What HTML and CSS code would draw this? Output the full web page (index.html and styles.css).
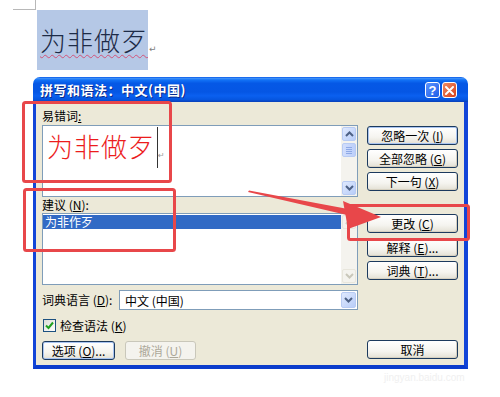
FILE: index.html
```html
<!DOCTYPE html>
<html lang="zh">
<head>
<meta charset="utf-8">
<title>拼写和语法</title>
<link rel="stylesheet" href="styles.css">
</head>
<body>
<div class="page">
  <div class="corner"></div>
  <div class="docline"><span class="sel">为非做歹</span><span class="ret">↵</span></div>

  <div class="dlg">
    <div class="titlebar">
      <span class="title">拼写和语法：中文(中国)</span>
      <div class="tbtns">
        <span class="tb help">?</span>
        <span class="tb close"><svg width="9" height="9" viewBox="0 0 9 9"><path d="M1 1L8 8M8 1L1 8" stroke="#fff" stroke-width="2" stroke-linecap="round"/></svg></span>
      </div>
    </div>
    <div class="body">
      <div class="left">
        <div class="lbl l1">易错词<u>:</u></div>
        <div class="box box1">
          <div class="boxtext"><span class="red">为非做歹</span><span class="caret"></span><span class="ret2">↵</span></div>
          <div class="sb">
            <span class="sbtn"><svg width="9" height="6" viewBox="0 0 9 6"><path d="M1 5L4.5 1.5L8 5" fill="none" stroke="#4d6185" stroke-width="2"/></svg></span>
            <span class="thumb"><i></i><i></i><i></i><i></i></span>
            <span class="track"></span>
            <span class="sbtn"><svg width="9" height="6" viewBox="0 0 9 6"><path d="M1 1L4.5 4.5L8 1" fill="none" stroke="#4d6185" stroke-width="2"/></svg></span>
          </div>
        </div>
        <div class="lbl l2">建议 (<u>N</u>):</div>
        <div class="box box2">
          <div class="list"><div class="row">为非作歹</div></div>
          <div class="sb dis">
            <span class="sbtn"><svg width="9" height="6" viewBox="0 0 9 6"><path d="M1 5L4.5 1.5L8 5" fill="none" stroke="#c9c7ba" stroke-width="2"/></svg></span>
            <span class="track"></span>
            <span class="sbtn"><svg width="9" height="6" viewBox="0 0 9 6"><path d="M1 1L4.5 4.5L8 1" fill="none" stroke="#c9c7ba" stroke-width="2"/></svg></span>
          </div>
        </div>
        <div class="langrow">
          <span class="lbl langlbl">词典语言 (<u>D</u>):</span>
          <div class="combo"><span class="ctext">中文 (中国)</span><span class="sbtn cbtn"><svg width="9" height="6" viewBox="0 0 9 6"><path d="M1 1L4.5 4.5L8 1" fill="none" stroke="#4d6185" stroke-width="2"/></svg></span></div>
        </div>
        <div class="chkrow">
          <span class="chk"><svg width="9" height="9" viewBox="0 0 9 9"><path d="M1 4.5L3.5 7L8 1.5" fill="none" stroke="#21a121" stroke-width="2"/></svg></span>
          <span class="lbl">检查语法 (<u>K</u>)</span>
        </div>
        <div class="btmrow">
          <button class="btn focus w73">选项 (<u>O</u>)...</button>
          <button class="btn disabled w71">撤消 (<u>U</u>)</button>
        </div>
      </div>
      <div class="right">
        <button class="btn focus r1">忽略一次 (<u>I</u>)</button>
        <button class="btn r2">全部忽略 (<u>G</u>)</button>
        <button class="btn r2">下一句 (<u>X</u>)</button>
        <button class="btn r4">更改 (<u>C</u>)</button>
        <button class="btn r5">解释 (<u>E</u>)...</button>
        <button class="btn r2">词典 (<u>T</u>)...</button>
        <button class="btn r7">取消</button>
      </div>
    </div>
  </div>
  <div class="wm">jingyan.baidu.com</div>

  <svg class="annot" width="500" height="397" viewBox="0 0 500 397">
    <g fill="none" stroke="#e8474a" stroke-width="3">
      <rect x="23.5" y="102.5" width="147" height="79" rx="2"/>
      <rect x="24.5" y="189.5" width="150" height="61" rx="2"/>
      <rect x="348.5" y="205.5" width="120" height="34" rx="2"/>
    </g>
    <g fill="#e8474a">
      <polygon points="248,192 249,190.5 348,209 347,215"/>
      <polygon points="343,201 381,217 348,229"/>
    </g>
  </svg>
</div>
</body>
</html>
```

FILE: styles.css
```css
* { box-sizing: border-box; }
html, body { margin: 0; padding: 0; }
body {
  width: 500px;
  height: 397px;
  overflow: hidden;
  background: #fff;
  font-family: "Noto Sans CJK SC", "Liberation Sans", sans-serif;
  font-size: 12px;
  color: #000;
}
.page { position: relative; width: 500px; height: 397px; }

.corner {
  margin-left: 13px;
  width: 23px;
  height: 10px;
  border-right: 1px solid #b8b8b8;
  border-bottom: 1px solid #b8b8b8;
}
.docline { display: flex; align-items: flex-end; margin-left: 37px; height: 60px; }
.sel {
  display: block;
  width: 111px;
  height: 60px;
  background: #b5c8e6;
  color: #1d2b47;
  font-size: 26px;
  font-weight: 300;
  line-height: 60px;
  padding-left: 3px;
  letter-spacing: 1px;
  white-space: nowrap;
  text-decoration: underline wavy #d2547a;
  text-decoration-thickness: 1px;
  text-underline-offset: 3px;
}
.ret {
  font-family: "DejaVu Sans", sans-serif;
  font-size: 9px;
  color: #808080;
  margin: 0 0 16px 1px;
}

.dlg { margin: 7px 0 0 33px; width: 435px; height: 292px; }
.titlebar {
  height: 25px;
  border-radius: 7px 7px 0 0;
  background: linear-gradient(#0a5ae8 0%, #3a8ef8 6%, #1272f6 12%, #0558e6 25%, #0556e4 60%, #0a60f0 75%, #0656e0 90%, #0a3fb8 100%);
  display: flex;
  align-items: center;
  justify-content: space-between;
  padding: 0 11px 0 7px;
}
.title {
  color: #fff;
  font-weight: bold;
  font-size: 13px;
  text-shadow: 1px 1px 0 #0a2a8a;
  letter-spacing: 0.5px;
}
.tbtns { display: flex; gap: 2px; margin-top: 1px; }
.tb {
  width: 15px;
  height: 16px;
  border: 1px solid #fff;
  border-radius: 3px;
  display: flex;
  align-items: center;
  justify-content: center;
  color: #fff;
  font-weight: bold;
  font-size: 13px;
  font-family: "Liberation Sans", sans-serif;
}
.help { background: linear-gradient(135deg, #5b93ff, #1e5ee8); }
.close { background: linear-gradient(135deg, #f08c64, #d8401c); }

.body {
  height: 267px;
  background: #ece9d8;
  border-left: 3px solid #1245d8;
  border-right: 4px solid #1245d8;
  border-bottom: 4px solid #0b3ccc;
  padding: 7px 6px 0 6px;
  display: flex;
  gap: 9px;
}
.left { width: 316px; display: flex; flex-direction: column; }
.right { width: 91px; display: flex; flex-direction: column; }

.lbl { height: 14px; line-height: 14px; font-size: 12px; white-space: nowrap; }
.l2 { margin-top: 1px; }
.l1 + .box { margin-top: 2px; }
.l2 + .box { margin-top: 1px; }

.box {
  width: 316px;
  height: 72px;
  border: 1px solid #7f9db9;
  background: #fff;
  display: flex;
}
.boxtext {
  flex: 1;
  display: flex;
  align-items: flex-start;
  padding: 1px 0 0 4px;
}
.red {
  color: #ec1c1c;
  font-size: 26px;
  font-weight: 300;
  line-height: 38px;
  letter-spacing: 1px;
  white-space: nowrap;
}
.caret { width: 1px; height: 41px; background: #333; margin-left: 2px; }
.ret2 {
  font-family: "DejaVu Sans", sans-serif;
  font-size: 8px;
  color: #9a9a9a;
  margin-top: 24px;
}

.sb {
  width: 16px;
  display: flex;
  flex-direction: column;
  background: #f4f3ee;
  padding: 1px;
}
.sbtn {
  width: 14px;
  height: 14px;
  border: 1px solid #b8cbf3;
  border-radius: 2px;
  background: linear-gradient(135deg, #dfe9fe, #b8cdf8);
  display: flex;
  align-items: center;
  justify-content: center;
  flex: none;
}
.thumb {
  width: 14px;
  height: 14px;
  margin-top: 2px;
  border: 1px solid #b8cbf3;
  border-radius: 2px;
  background: linear-gradient(90deg, #d2defc, #bccffa);
  display: flex;
  flex-direction: column;
  align-items: center;
  justify-content: center;
  gap: 1px;
  flex: none;
}
.thumb i { display: block; width: 6px; height: 1px; background: #8ea9e6; }
.track { flex: 1; }
.dis .sbtn { background: #f4f3ee; border-color: #e8e6dc; }

.list { flex: 1; padding-top: 1px; }
.row {
  height: 14px;
  line-height: 14px;
  background: #316ac5;
  color: #fff;
  padding-left: 2px;
  font-size: 12px;
}

.langrow { display: flex; align-items: center; margin-top: 5px; height: 20px; }
.langlbl { width: 77px; }
.combo {
  flex: 1;
  height: 20px;
  border: 1px solid #7f9db9;
  background: #fff;
  display: flex;
  align-items: center;
  padding: 1px;
}
.ctext { flex: 1; padding-left: 4px; font-size: 12px; }
.cbtn { width: 15px; height: 16px; }

.chkrow { display: flex; align-items: center; gap: 4px; margin-top: 9px; height: 13px; padding-left: 1px; }
.chk {
  width: 13px;
  height: 13px;
  border: 1px solid #1c5180;
  background: linear-gradient(135deg, #dcdcd6, #fff);
  display: flex;
  align-items: center;
  justify-content: center;
}

.btmrow { display: flex; gap: 10px; margin-top: 9px; }
.btn {
  height: 19px;
  padding: 0;
  border: 1px solid #1c3a5e;
  border-radius: 3px;
  background: linear-gradient(#ffffff, #f5f4ef 60%, #e3e0d4);
  font-family: "Noto Sans CJK SC", "Liberation Sans", sans-serif;
  font-size: 12px;
  line-height: 15px;
  color: #000;
  white-space: nowrap;
  box-shadow: inset -1px -1px 0 #d6d0c0;
}
.btn.focus { box-shadow: inset 0 0 0 1px #a9c4f0; }
.btn.disabled { border-color: #c9c7ba; color: #aca899; background: #f4f3ee; box-shadow: none; }
.w73 { width: 73px; }
.w71 { width: 71px; }
.right .btn { width: 91px; }
.r1 { margin-top: 17px; }
.r2 { margin-top: 4px; }
.r4 { margin-top: 23px; }
.r5 { margin-top: 5px; }
.r7 { margin-top: 60px; }

.wm {
  position: absolute;
  left: 384px;
  top: 372px;
  font-family: "Liberation Sans", sans-serif;
  font-size: 10px;
  color: #f0f0f0;
}
.annot { position: absolute; left: 0; top: 0; pointer-events: none; }
```
